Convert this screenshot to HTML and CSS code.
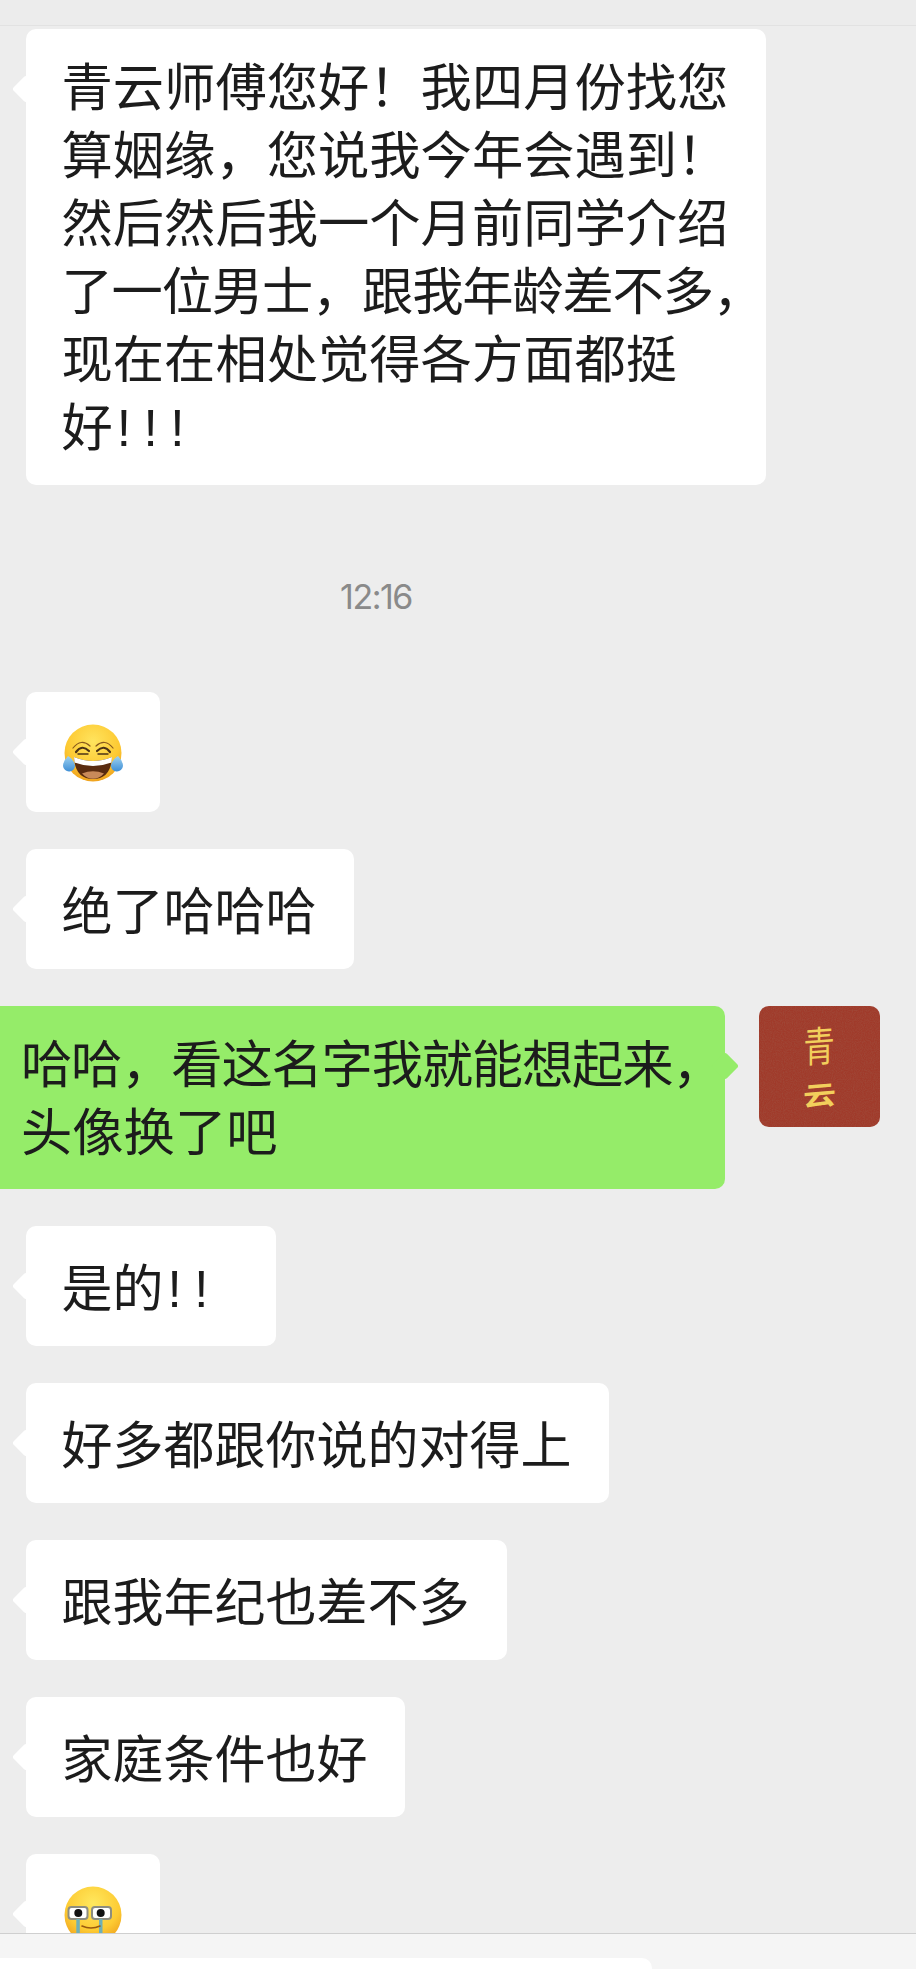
FILE: index.html
```html
<!DOCTYPE html>
<html lang="zh-CN">
<head>
<meta charset="utf-8">
<title>聊天</title>
<link rel="stylesheet" href="styles.css">
</head>
<body>
<div class="app">
  <div class="topbar"></div>
  <main class="chat">
    <div class="row">
      <div class="bubble recv">青云师傅您好！我四月份找您<br>算姻缘，您说我今年会遇到！<br>然后然后我一个月前同学介绍<br><span class="tight">了一位男士，跟我年龄差不多，</span><br>现在在相处觉得各方面都挺<br>好<span class="bang">!!!</span></div>
    </div>
    <div class="time">12:16</div>
    <div class="row">
      <div class="bubble recv emoji-bubble">
        <svg class="emoji" viewBox="0 0 60 60" aria-hidden="true">
          <defs>
            <radialGradient id="fa" cx="50%" cy="30%" r="72%"><stop offset="0" stop-color="#ffe45e"/><stop offset=".65" stop-color="#fdc932"/><stop offset="1" stop-color="#ee9f1c"/></radialGradient>
            <linearGradient id="ta" x1="0" y1="0" x2="0" y2="1"><stop offset="0" stop-color="#9fd2f0"/><stop offset="1" stop-color="#3f8fd6"/></linearGradient>
          </defs>
          <circle cx="30" cy="29" r="28.500" fill="url(#fa)"/>
          <path d="M11 33 Q30 41 49 33 Q48 55 30 55 Q12 55 11 33Z" fill="#5a2c10"/>
          <path d="M11 33 Q30 41 49 33 L48.500 38.500 Q30 45.500 11.500 38.500Z" fill="#fff"/>
          <path d="M19 49.500 Q30 45 41 49.500 Q36 54.800 30 54.800 Q24 54.800 19 49.500Z" fill="#c98a5a"/>
          <path d="M10 24 Q18 14 27 22 M33 22 Q42 14 50 24" fill="none" stroke="#8a5a1c" stroke-width="1.200" stroke-linecap="round"/>
          <path d="M13 28 Q19 20 26 27 M34 27 Q41 20 47 28" fill="none" stroke="#4c3316" stroke-width="2.200" stroke-linecap="round"/>
          <path d="M15 30 H25 M35 30 H45" fill="none" stroke="#4c3316" stroke-width="1.400" stroke-linecap="round"/>
          <path d="M5 32 Q10 35 12 41 A6 6 0 0 1 0 42 Q0 37 5 32Z" fill="url(#ta)"/>
          <path d="M55 32 Q50 35 48 41 A6 6 0 0 0 60 42 Q60 37 55 32Z" fill="url(#ta)"/>
        </svg>
      </div>
    </div>
    <div class="row"><div class="bubble recv single">绝了哈哈哈</div></div>
    <div class="row mine">
      <div class="bubble sent"><span class="tight">哈哈，看这名字我就能想起来，</span><br>头像换了吧</div>
      <div class="avatar">
        <svg class="grain" width="121" height="121" aria-hidden="true">
          <filter id="n" x="0" y="0" width="100%" height="100%">
            <feTurbulence type="fractalNoise" baseFrequency="0.9" numOctaves="2" seed="4"/>
            <feColorMatrix type="matrix" values="0 0 0 0 0.35  0 0 0 0 0.08  0 0 0 0 0.05  0 0 0 1.1 -0.35"/>
          </filter>
          <rect width="121" height="121" filter="url(#n)"/>
        </svg>
        <span class="av-a">青</span><span class="av-b">云</span>
      </div>
    </div>
    <div class="row"><div class="bubble recv single">是的<span class="bang wide">!!</span></div></div>
    <div class="row"><div class="bubble recv single">好多都跟你说的对得上</div></div>
    <div class="row"><div class="bubble recv single">跟我年纪也差不多</div></div>
    <div class="row"><div class="bubble recv single">家庭条件也好</div></div>
    <div class="row">
      <div class="bubble recv emoji-bubble">
        <svg class="emoji" viewBox="0 0 60 60" aria-hidden="true">
          <defs>
            <radialGradient id="fb" cx="50%" cy="30%" r="72%"><stop offset="0" stop-color="#ffe85e"/><stop offset=".65" stop-color="#fdcb33"/><stop offset="1" stop-color="#ee9f1c"/></radialGradient>
          </defs>
          <circle cx="30" cy="29" r="28.500" fill="url(#fb)"/>
          <rect x="5.500" y="21" width="19" height="12" rx="3" fill="#fff" stroke="#8d8d80" stroke-width="2"/>
          <rect x="29" y="21" width="19" height="12" rx="3" fill="#fff" stroke="#8d8d80" stroke-width="2"/>
          <circle cx="15.300" cy="27" r="4" fill="#111"/>
          <circle cx="37.700" cy="27" r="4" fill="#111"/>
          <rect x="13.300" y="33" width="3.500" height="18" fill="#6fb0b8"/>
          <rect x="36" y="33" width="3.500" height="18" fill="#6fb0b8"/>
          <path d="M19 40 Q28 44 37 40" fill="none" stroke="#9a5a10" stroke-width="1.600" stroke-linecap="round"/>
        </svg>
      </div>
    </div>
  </main>
  <footer class="footer"><div class="input"></div></footer>
</div>
</body>
</html>
```
FILE: styles.css
```css
* { box-sizing: border-box; }
html, body { margin: 0; padding: 0; }
body {
  width: 916px;
  height: 1969px;
  overflow: hidden;
  background: #ededed;
  font-family: "Liberation Sans", "Noto Sans CJK SC", sans-serif;
}
.app {
  height: 1969px;
  display: flex;
  flex-direction: column;
}
.topbar {
  height: 26px;
  flex: none;
  background: #ececec;
  border-bottom: 1px solid #e2e2e2;
}
.chat {
  flex: 1;
  min-height: 0;
  overflow: hidden;
  padding: 3px 0 0 26px;
  display: flex;
  flex-direction: column;
  gap: 37px;
}
.row { display: flex; flex: none; }
.row.mine {
  justify-content: flex-end;
  align-items: flex-start;
  gap: 34px;
  padding-right: 36px;
  margin-left: -26px;
}
.bubble {
  position: relative;
  flex: none;
  border-radius: 10px;
  font-size: 51.300px;
  line-height: 68px;
  color: #1c1c1c;
  white-space: nowrap;
}
.bubble::before {
  content: "";
  position: absolute;
  top: 50px;
  width: 20px;
  height: 20px;
  transform: rotate(45deg);
  border-radius: 3px;
  background: inherit;
}
.tight { letter-spacing: -1.200px; }
.bang { letter-spacing: 12.500px; margin-left: 4px; margin-right: 14px; }
.bang.wide { margin-right: 18px; }
.recv { background: #fff; width: 740px; padding: 26px 20px 22px 35.500px; }
.recv::before { left: -10px; }
.single { width: auto; font-size: 51px; padding: 30px 37px 22px 35.500px; }
.sent { background: #95ec69; width: 760px; height: 183px; padding: 26px 20px 0 56px; }
.sent::before { right: -10px; }
.emoji-bubble { width: 134px; height: 120px; padding: 4px 0 0 37px; display: flex; align-items: center; }
.emoji { display: block; width: 60px; height: 60px; flex: none; }
.time {
  flex: none;
  margin: 55px 0 38px -26px;
  height: 40px;
  width: 752px;
  text-align: center;
  font-family: "Inter", "Noto Sans", sans-serif;
  font-size: 34px;
  line-height: 40px;
  letter-spacing: -1.500px;
  color: #8a8a8a;
}
.avatar {
  position: relative;
  overflow: hidden;
  flex: none;
  width: 121px;
  height: 121px;
  border-radius: 10px;
  background: #a03a2a;
  display: flex;
  flex-direction: column;
  align-items: center;
  color: #f2cf5c;
  font-family: "Noto Sans CJK SC", sans-serif;
}
.grain { position: absolute; left: 0; top: 0; }
.av-a, .av-b { position: relative; display: block; }
.av-a { font-size: 38px; line-height: 44px; margin-top: 16px; transform: scale(.82, 1.100) skewY(-3deg); }
.av-b { font-size: 33px; line-height: 40px; margin-top: 8px; font-weight: 700; transform: scaleY(.8) skewY(-6deg); }
.footer {
  flex: none;
  height: 36px;
  background: #f5f5f5;
  border-top: 1px solid #cfcfcf;
  padding-top: 24px;
  overflow: hidden;
}
.input {
  width: 652px;
  height: 30px;
  background: #fff;
  border-radius: 0 10px 0 0;
}
```
